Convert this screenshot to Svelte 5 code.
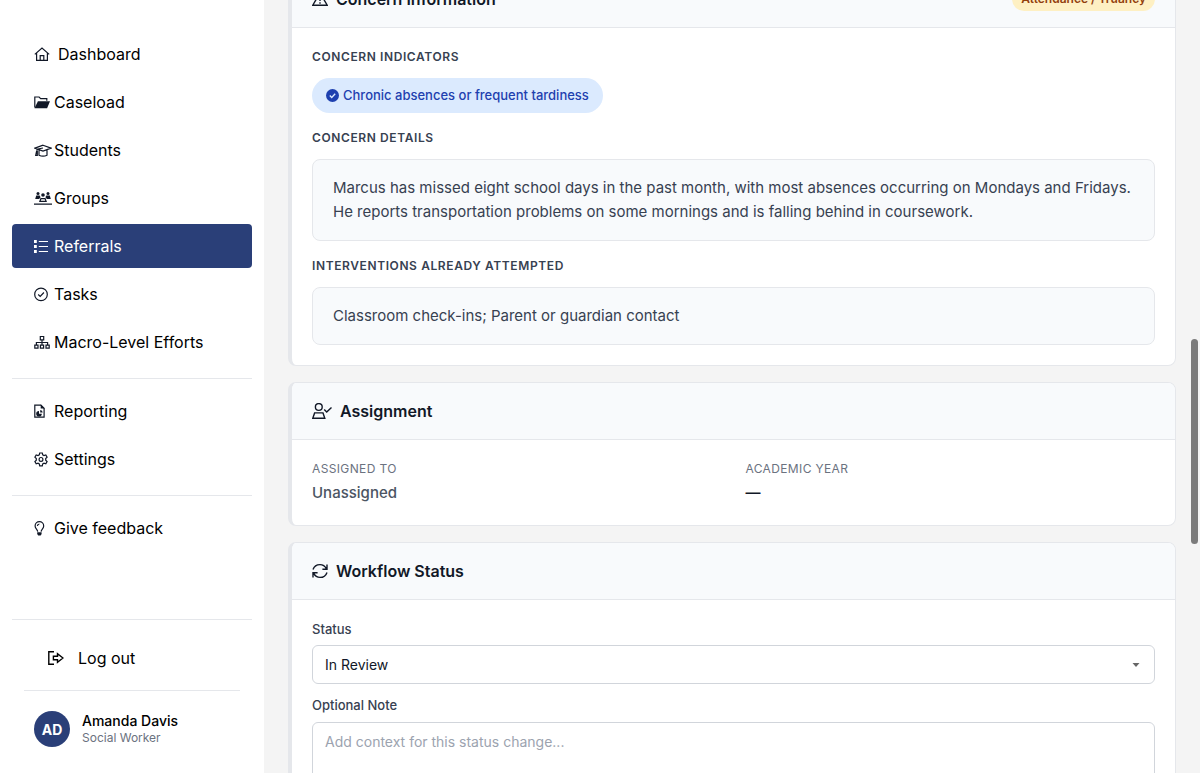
<script lang="ts">
type NavItem = { label: string; icon: string; width: number };

const groups: NavItem[][] = [
  [
    { label: "Dashboard", icon: "home", width: 16 },
    { label: "Caseload", icon: "folder", width: 16 },
    { label: "Students", icon: "cap", width: 18 },
    { label: "Groups", icon: "users", width: 18 },
    { label: "Referrals", icon: "list", width: 14 },
    { label: "Tasks", icon: "check", width: 14 },
    { label: "Macro-Level Efforts", icon: "sitemap", width: 16 },
  ],
  [
    { label: "Reporting", icon: "report", width: 12 },
    { label: "Settings", icon: "gear", width: 14 },
  ],
  [{ label: "Give feedback", icon: "bulb", width: 12 }],
];

let active = $state("Referrals");
let status = $state("In Review");
let note = $state("");
</script>

{#snippet navIcon(name: string, width: number)}
  <svg class="icon" {width} height="16" viewBox="0 0 {width} 16" aria-hidden="true">
    {#if name === "home"}
      <path d="M.8 8.4 8 2.1l7.2 6.3M2.6 7.2v7.2h10.8V7.2M6.2 14.4V9.6h3.6v4.8" />
    {:else if name === "folder"}
      <path d="M.8 13.5V3h4.3l1.6 1.6h6.1v2.2" />
      <path class="fill" d="M3.9 7.2H16l-2.9 7H.5z" />
    {:else if name === "cap"}
      <path d="M9 3.2 17 6.1 9 9 1 6.1zM9 6 3 7.2v2M5 8v5.2q4 2 8 0V8" />
      <path d="M2.6 9 1.7 13.4h1.6V9" />
    {:else if name === "users"}
      <circle class="fill" cx="4" cy="3.4" r="1.5" />
      <circle class="fill" cx="9" cy="5" r="1.8" />
      <circle class="fill" cx="14" cy="3.4" r="1.5" />
      <path class="fill" d="M1.2 8.9 2.2 5.6h3.5l.9 1.7-1.5 1.6zM16.8 8.9l-1-3.3h-3.5l-.9 1.7 1.5 1.6z" />
      <path d="m5.9 11.3 1-2.6h4.2l1 2.6zM0 14.2h18" />
    {:else if name === "list"}
      <path class="fill" d="M0 2.1h2.8v2.8H0zM0 7.1h2.8v2.8H0zM0 12.1h2.8v2.8H0z" />
      <path d="M4.8 3.5H14M4.8 8.5H14M4.8 13.5H14" />
    {:else if name === "check"}
      <circle cx="7" cy="8.4" r="6.3" />
      <path d="m4.2 8.5 2 1.9 3.7-3.9" />
    {:else if name === "sitemap"}
      <path d="M6.3 2.5h3.4v3.3H6.3zM.8 11.1H4v3H.8zM6.4 11.1h3.2v3H6.4zM12 11.1h3.2v3H12zM8 5.8v5.3M2.4 11.1V8.5h11.2v2.6" />
    {:else if name === "report"}
      <path d="M.8 2.1h6.1l3.2 3.1v8.9H.8z" />
      <path class="fill" d="M6.7 1.5v4h4zM5 8v2.8h2.8A2.8 2.8 0 1 1 5 8zM6.2 7a2.7 2.7 0 0 1 2.5 2.6H6.2z" />
    {:else if name === "gear"}
      <path d="M5.7 2h2.6l.4 1.9 1.3.7 1.8-.6 1.3 2.2-1.4 1.4v1.6l1.4 1.4-1.3 2.2-1.8-.6-1.3.7-.4 1.9H5.7l-.4-1.9-1.3-.7-1.8.6-1.3-2.2 1.4-1.4V7.6L.9 6.2 2.2 4l1.8.6 1.3-.7z" />
      <circle cx="7" cy="8.4" r="1.9" />
    {:else if name === "bulb"}
      <path d="M3.7 11.6C3.5 9.4 1.1 8.7 1.1 6a4.3 4.3 0 0 1 8.6 0c0 2.7-2.4 3.4-2.6 5.6M3.4 6A2.1 2.1 0 0 1 5.4 4" />
      <path class="fill" d="M3.2 12.2h4.4v1.9l-1 1.3H4.2l-1-1.3z" />
    {/if}
  </svg>
{/snippet}

<div class="layout">
  <aside class="sidebar">
    <nav>
      {#each groups as group}
        <ul class="nav-group">
          {#each group as item}
            <li>
              <a
                href="#{item.icon}"
                class="nav-item"
                class:active={active === item.label}
                class:wide={item.icon === "home"}
                onclick={() => (active = item.label)}
              >
                <span class="nav-icon">{@render navIcon(item.icon, item.width)}</span>
                {item.label}
              </a>
            </li>
          {/each}
        </ul>
      {/each}
    </nav>

    <div class="sidebar-footer">
      <button class="logout">
        <svg class="icon" width="16" height="16" viewBox="0 0 16 16" aria-hidden="true">
          <path d="M6 1.8H.8v12.4H6M5.4 6.2h4.1V3.6L15 8l-5.5 4.4V9.8H5.4z" />
        </svg>
        Log out
      </button>
      <div class="profile">
        <div class="avatar">AD</div>
        <div>
          <div class="profile-name">Amanda Davis</div>
          <div class="profile-role">Social Worker</div>
        </div>
      </div>
    </div>
  </aside>

  <main class="content">
    <div class="cards">
      <section class="card">
        <header class="card-header">
          <svg class="icon" width="16" height="16" viewBox="0 0 16 16" aria-hidden="true">
            <path d="M8 1.8 15.2 14.2H.8zM8 6v4M8 11.2v1.6" />
          </svg>
          <h2>Concern Information</h2>
          <span class="badge">Attendance / Truancy</span>
        </header>
        <div class="card-body">
          <h3>Concern Indicators</h3>
          <span class="pill">
            <svg width="13" height="13" viewBox="0 0 13 13" aria-hidden="true">
              <circle cx="6.5" cy="6.5" r="6.5" fill="#1e40af" />
              <path d="m3.8 6.6 1.9 1.8 3.5-3.6" fill="none" stroke="#dbeafe" stroke-width="1.4" />
            </svg>
            Chronic absences or frequent tardiness
          </span>
          <h3>Concern Details</h3>
          <p class="text-box">
            Marcus has missed eight school days in the past month, with most absences occurring on Mondays and Fridays.
            He reports transportation problems on some mornings and is falling behind in coursework.
          </p>
          <h3>Interventions Already Attempted</h3>
          <p class="text-box">Classroom check-ins; Parent or guardian contact</p>
        </div>
      </section>

      <section class="card">
        <header class="card-header">
          <svg class="icon" width="20" height="16" viewBox="0 0 20 16" aria-hidden="true">
            <circle cx="6.8" cy="4" r="3.4" />
            <path d="M.8 15.2 2.6 9.9H11l1.8 5.3zM12.2 6.6l2.5 2.5 4.8-4.6" />
          </svg>
          <h2>Assignment</h2>
        </header>
        <dl class="card-body info-grid">
          <div>
            <dt>Assigned To</dt>
            <dd class="muted">Unassigned</dd>
          </div>
          <div>
            <dt>Academic Year</dt>
            <dd>—</dd>
          </div>
        </dl>
      </section>

      <section class="card">
        <header class="card-header">
          <svg class="icon" width="16" height="16" viewBox="0 0 16 16" aria-hidden="true">
            <path d="M1 6.6C2.1 3.4 4.7 1.6 8 1.6c2.8 0 5 1.5 6.3 4M15 1.6v4.6h-4.6M15 9.4c-1.1 3.2-3.7 5-7 5-2.8 0-5-1.5-6.3-4M1 14.4V9.8h4.6" />
          </svg>
          <h2>Workflow Status</h2>
        </header>
        <div class="card-body form">
          <div class="field">
            <label for="status">Status</label>
            <div class="select-wrap">
              <select id="status" bind:value={status}>
                <option>Submitted</option>
                <option>In Review</option>
                <option>Closed</option>
              </select>
              <svg class="caret" width="8" height="4" viewBox="0 0 8 4" aria-hidden="true">
                <path d="M.5 0h7L4 4z" fill="#666" />
              </svg>
            </div>
          </div>
          <div class="field">
            <label for="note">Optional Note</label>
            <textarea id="note" rows="4" placeholder="Add context for this status change..." bind:value={note}></textarea>
          </div>
        </div>
      </section>
    </div>
    <div class="scroll-thumb"></div>
  </main>
</div>

<style>
  :global(body) {
    font-family: Inter, sans-serif;
    color: #111827;
    background: #f4f4f4;
  }

  .layout {
    display: flex;
    height: 100vh;
    overflow: hidden;
  }

  .sidebar {
    box-sizing: border-box;
    flex: 0 0 264px;
    display: flex;
    flex-direction: column;
    justify-content: space-between;
    padding: 32px 12px 26px;
    background: #fff;
  }

  .nav-group {
    display: flex;
    flex-direction: column;
    gap: 4px;
    list-style: none;
    margin: 0;
    padding: 0;
  }

  .nav-group + .nav-group {
    margin-top: 14px;
    padding-top: 10px;
    border-top: 1px solid #e5e7eb;
  }

  .nav-item {
    display: flex;
    align-items: center;
    height: 44px;
    padding-left: 22px;
    border-radius: 4px;
    color: #000;
    font-size: 16px;
    text-decoration: none;
  }

  .nav-item.active {
    background: #2a3f78;
    color: #fff;
  }

  .nav-icon {
    display: flex;
    width: 20px;
    color: #111827;
  }

  .wide .nav-icon {
    width: 24px;
  }

  .active .nav-icon {
    color: #fff;
  }

  .icon {
    flex: none;
    fill: none;
    stroke: currentColor;
    stroke-width: 1.4;
  }

  .nav-icon .icon {
    stroke-width: 1.2;
  }

  .icon .fill {
    fill: currentColor;
    stroke: none;
  }

  .sidebar-footer {
    padding-top: 16px;
    border-top: 1px solid #e5e7eb;
  }

  .logout {
    display: flex;
    align-items: center;
    gap: 14px;
    width: 100%;
    height: 44px;
    padding: 0 36px;
    border: none;
    background: transparent;
    color: #000;
    font: inherit;
    font-size: 16px;
    cursor: pointer;
  }

  .profile {
    display: flex;
    align-items: center;
    gap: 12px;
    margin: 10px 12px 0;
    padding: 20px 10px 0;
    border-top: 1px solid #e5e7eb;
  }

  .avatar {
    display: flex;
    align-items: center;
    justify-content: center;
    width: 36px;
    height: 36px;
    border-radius: 50%;
    background: #2a3f78;
    color: #fff;
    font-size: 14px;
    font-weight: 700;
  }

  .profile-name {
    color: #000;
    font-size: 14px;
    font-weight: 500;
    line-height: 18px;
  }

  .profile-role {
    color: #6b7280;
    font-size: 12px;
    line-height: 16px;
  }

  .content {
    position: relative;
    flex: 1;
    min-width: 0;
    overflow: hidden;
  }

  /* the pane is scrolled part of the way into the first card */
  .cards {
    display: flex;
    flex-direction: column;
    gap: 16px;
    margin-top: -30px;
    padding: 0 24px 24px;
  }

  .card {
    border: 1px solid #e5e7eb;
    border-left: 4px solid #e5e7eb;
    border-radius: 8px;
    background: #fff;
    overflow: hidden;
  }

  .card-header {
    display: flex;
    align-items: center;
    gap: 8px;
    height: 56px;
    padding: 0 20px;
    border-bottom: 1px solid #e5e7eb;
    background: #f8fafc;
  }

  h2 {
    margin: 0;
    font-size: 16px;
    font-weight: 600;
  }

  .badge {
    margin-left: auto;
    padding: 0 9px;
    border-radius: 999px;
    background: #fef0c3;
    color: #92400e;
    font-size: 12px;
    font-weight: 600;
    line-height: 24px;
  }

  .card-body {
    margin: 0;
    padding: 20px;
  }

  h3 {
    margin: 16px 0 12px;
    color: #374151;
    font-size: 12px;
    font-weight: 600;
    line-height: 18px;
    letter-spacing: 0.05em;
    text-transform: uppercase;
  }

  h3:first-child {
    margin-top: 0;
  }

  .pill {
    display: flex;
    align-items: center;
    gap: 4px;
    width: fit-content;
    padding: 9px 14px 10px;
    border-radius: 999px;
    background: #dbeafe;
    color: #1e40af;
    font-size: 13px;
    font-weight: 500;
    line-height: 16px;
  }

  .text-box {
    margin: 0;
    padding: 16px 20px;
    border: 1px solid #e5e7eb;
    border-radius: 8px;
    background: #f8fafc;
    color: #374151;
    font-size: 15px;
    line-height: 24px;
  }

  .info-grid {
    display: grid;
    grid-template-columns: 1fr 1fr;
    gap: 24px;
  }

  dt {
    margin-bottom: 3px;
    color: #6b7280;
    font-size: 12px;
    line-height: 18px;
    letter-spacing: 0.03em;
    text-transform: uppercase;
  }

  dd {
    margin: 0;
    padding-bottom: 1px;
    font-size: 15px;
    font-weight: 500;
    line-height: 23px;
  }

  .muted {
    color: #4b5563;
  }

  .form {
    display: flex;
    flex-direction: column;
    gap: 12px;
  }

  .field {
    display: flex;
    flex-direction: column;
    gap: 6px;
  }

  label {
    color: #374151;
    font-size: 13px;
    font-weight: 500;
    line-height: 19px;
  }

  .select-wrap {
    position: relative;
  }

  select,
  textarea {
    box-sizing: border-box;
    display: block;
    width: 100%;
    border: 1px solid #d1d5db;
    border-radius: 6px;
    background: #fff;
    color: #111827;
    font-family: inherit;
    font-size: 14px;
  }

  select {
    appearance: none;
    height: 39px;
    padding: 0 12px;
  }

  .caret {
    position: absolute;
    top: 18px;
    right: 15px;
    pointer-events: none;
  }

  textarea {
    margin-top: 1px;
    padding: 10px 12px;
    resize: vertical;
  }

  textarea::placeholder {
    color: #9ca3af;
  }

  .scroll-thumb {
    position: absolute;
    top: 339px;
    right: 2px;
    width: 7px;
    height: 205px;
    border-radius: 4px;
    background: #7b7b7b;
  }
</style>
